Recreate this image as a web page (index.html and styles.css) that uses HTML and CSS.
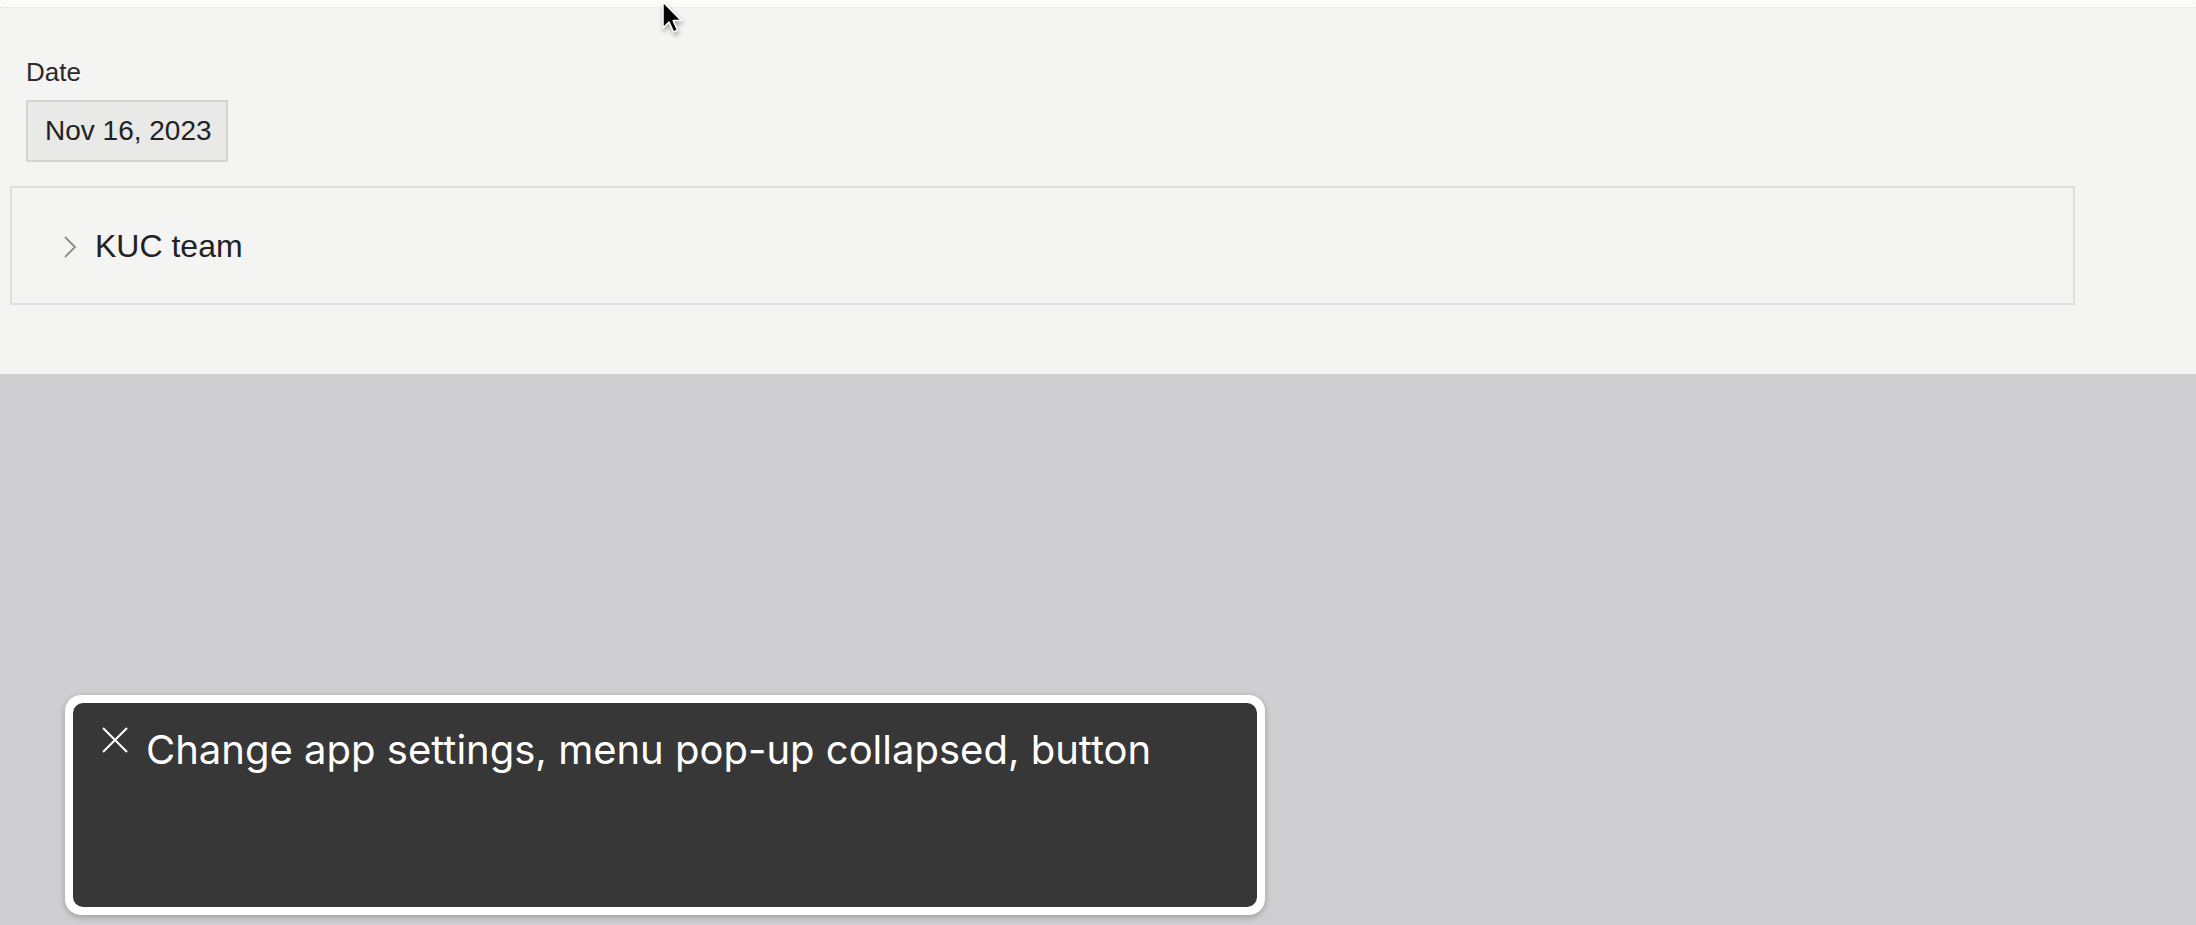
FILE: index.html
```html
<!DOCTYPE html>
<html lang="en">
<head>
<meta charset="utf-8">
<title>Date field</title>
<link rel="stylesheet" href="styles.css">
</head>
<body>
<div class="page">
  <div class="top-strip"></div>
  <div class="content">
    <div class="field">
      <div class="field-label">Date</div>
      <div class="date-box">Nov 16, 2023</div>
    </div>
    <div class="group-panel">
      <svg class="chevron" width="14" height="24" viewBox="0 0 14 24"><path d="M2 2 L12 12 L2 22" fill="none" stroke="#8a8a8a" stroke-width="1.8"/></svg>
      <span class="group-title">KUC team</span>
    </div>
  </div>
  <div class="overlay"></div>
</div>
<svg class="cursor" width="30" height="36" viewBox="0 0 30 36"><path d="M2 1 L2 27 L8 21 L12.5 31 L16.5 29.3 L12.2 19.6 L20.5 19.6 Z" fill="#000" stroke="#fff" stroke-width="1.5" stroke-linejoin="round"/></svg>
<div class="toast">
  <div class="toast-inner">
    <svg class="toast-close" width="26" height="26" viewBox="0 0 26 26"><path d="M1 1 L25 25 M25 1 L1 25" stroke="#fff" stroke-width="2" fill="none"/></svg>
    <span class="toast-text">Change app settings, menu pop-up collapsed, button</span>
  </div>
</div>
</body>
</html>
```
FILE: styles.css
```css
html, body {
  margin: 0;
  padding: 0;
}
body {
  width: 2196px;
  height: 925px;
  overflow: hidden;
  font-family: "Liberation Sans", Arial, sans-serif;
  color: #222;
  background: #cfcfd1;
}
.page {
  display: flex;
  flex-direction: column;
  height: 925px;
}
.top-strip {
  height: 7px;
  background: #fbfbf9;
  border-bottom: 1px dotted #e2e2dc;
}
.content {
  background: #f4f4f2;
  padding: 0 0 0 10px;
  height: 366px;
  box-sizing: border-box;
}
.field {
  padding: 49px 0 0 16px;
}
.field-label {
  font-size: 26px;
  line-height: 30px;
  color: #2a2a2a;
}
.date-box {
  margin-top: 13px;
  width: 202px;
  height: 62px;
  box-sizing: border-box;
  border: 2px solid #d4d4d4;
  background: #e9e9e7;
  font-size: 28px;
  line-height: 58px;
  padding-left: 17px;
  color: #222;
}
.group-panel {
  margin-top: 24px;
  width: 2065px;
  height: 119px;
  box-sizing: border-box;
  border: 2px solid #dedee2;
  display: flex;
  align-items: center;
  padding-left: 51px;
  gap: 18px;
}
.chevron {
  display: block;
  margin-top: 2px;
}
.group-title {
  font-size: 32px;
  color: #222;
  line-height: 40px;
}
.overlay {
  flex: 1;
  background: #cfcfd1;
}
.cursor {
  position: absolute;
  left: 661px;
  top: 1px;
  filter: drop-shadow(1px 3px 2px rgba(0,0,0,0.3));
}
.toast {
  position: absolute;
  left: 65px;
  top: 695px;
  width: 1200px;
  height: 220px;
  box-sizing: border-box;
  padding: 8px;
  background: #ffffff;
  border-radius: 16px;
  box-shadow: 0 2px 6px rgba(0,0,0,0.25);
}
.toast-inner {
  height: 100%;
  box-sizing: border-box;
  background: #373737;
  border-radius: 10px;
  display: flex;
  align-items: flex-start;
  padding: 23px 0 0 29px;
  gap: 18px;
}
.toast-close {
  display: block;
  margin-top: 1px;
  flex: none;
}
.toast-text {
  font-family: Inter, "Noto Sans", sans-serif;
  font-size: 40px;
  line-height: 48px;
  color: #ffffff;
}
```
